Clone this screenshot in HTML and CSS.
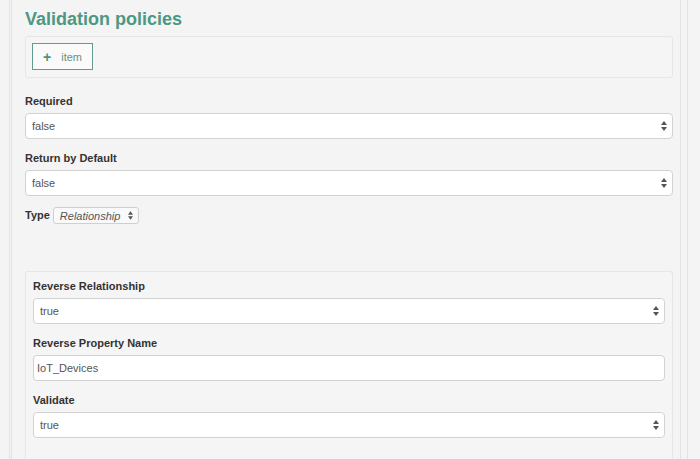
FILE: index.html
```html
<!DOCTYPE html>
<html>
<head>
<meta charset="utf-8">
<link rel="stylesheet" href="styles.css">
</head>
<body>
<div class="shell">
  <div class="content">
    <h2 class="title">Validation policies</h2>
    <div class="panel items">
      <button class="add-btn"><span class="plus">+</span><span class="btn-label">item</span></button>
    </div>

    <div class="field">
      <div class="label">Required</div>
      <div class="select"><span class="value">false</span>
        <svg class="arrows" width="6" height="10" viewBox="0 0 6 10"><path d="M3 0 L6 4 L0 4 Z M3 10 L6 6 L0 6 Z" fill="#555"/></svg>
      </div>
    </div>

    <div class="field">
      <div class="label">Return by Default</div>
      <div class="select"><span class="value">false</span>
        <svg class="arrows" width="6" height="10" viewBox="0 0 6 10"><path d="M3 0 L6 4 L0 4 Z M3 10 L6 6 L0 6 Z" fill="#555"/></svg>
      </div>
    </div>

    <div class="type-row">
      <span class="label inline">Type</span>
      <div class="mini-select"><span class="value italic">Relationship</span>
        <svg class="arrows" width="5" height="9" viewBox="0 0 6 10"><path d="M3 0 L6 4 L0 4 Z M3 10 L6 6 L0 6 Z" fill="#555"/></svg>
      </div>
    </div>

    <div class="panel sub">
      <div class="field first">
        <div class="label">Reverse Relationship</div>
        <div class="select"><span class="value">true</span>
          <svg class="arrows" width="6" height="10" viewBox="0 0 6 10"><path d="M3 0 L6 4 L0 4 Z M3 10 L6 6 L0 6 Z" fill="#555"/></svg>
        </div>
      </div>
      <div class="field">
        <div class="label">Reverse Property Name</div>
        <div class="input"><span class="value">IoT_Devices</span></div>
      </div>
      <div class="field">
        <div class="label">Validate</div>
        <div class="select"><span class="value">true</span>
          <svg class="arrows" width="6" height="10" viewBox="0 0 6 10"><path d="M3 0 L6 4 L0 4 Z M3 10 L6 6 L0 6 Z" fill="#555"/></svg>
        </div>
      </div>
    </div>
  </div>
</div>
</body>
</html>
```

FILE: styles.css
```css
* { box-sizing: border-box; }

html, body {
  margin: 0;
  padding: 0;
  background: #f4f4f4;
  height: 459px;
  overflow: hidden;
  font-family: "Liberation Sans", Arial, Helvetica, sans-serif;
}

.shell {
  margin-left: 9px;
  width: 679px;
  height: 459px;
  border-left: 1px solid #e3e3e3;
  border-right: 1px solid #e3e3e3;
  padding-left: 1px;
  padding-right: 6px;
}

.content {
  height: 100%;
  border-left: 1px solid #e3e3e3;
  border-right: 1px solid #e3e3e3;
  padding: 9px 7px 0 13px;
  display: flex;
  flex-direction: column;
}

.title {
  margin: 0;
  font-size: 18px;
  line-height: 20px;
  font-weight: bold;
  color: #4c9883;
}

.panel {
  background: #f5f5f5;
  border: 1px solid #e6e6e6;
  border-radius: 3px;
}

.items {
  margin-top: 7px;
  padding: 6px 6px 7px;
  height: 42px;
}

.add-btn {
  display: flex;
  align-items: center;
  height: 27px;
  width: 61px;
  padding: 0 0 0 10px;
  margin: 0;
  background: #fafafa;
  border: 1px solid #5f9e8c;
  border-radius: 0;
  font-family: inherit;
}

.plus {
  font-size: 14px;
  font-weight: bold;
  color: #4a9580;
  line-height: 1;
}

.btn-label {
  margin-left: 10px;
  font-size: 11px;
  color: #6b8f84;
}

.field {
  display: flex;
  flex-direction: column;
  margin-top: 12px;
}

.content > .items + .field {
  margin-top: 16px;
}

.sub .field.first {
  margin-top: 0;
}

.label {
  font-size: 11px;
  line-height: 15px;
  font-weight: bold;
  color: #333;
  margin-bottom: 4px;
}

.label.inline {
  margin: 0 3px 0 0;
}

.select, .input {
  height: 26px;
  background: #fff;
  border: 1px solid #d2d2d2;
  border-radius: 4px;
  display: flex;
  align-items: center;
  justify-content: space-between;
  padding: 0 5px 0 6px;
}

.input {
  padding-left: 3px;
}

.value {
  font-size: 11px;
  color: #555;
}

.italic {
  font-style: italic;
}

.arrows {
  display: block;
}

.type-row {
  display: flex;
  align-items: center;
  margin-top: 11px;
  height: 17px;
}

.mini-select {
  width: 86px;
  height: 17px;
  border: 1px solid #cfcfcf;
  border-radius: 3px;
  background: #f9f9f9;
  display: flex;
  align-items: center;
  justify-content: space-between;
  padding: 0 5px 0 6px;
}

.sub {
  margin-top: 47px;
  padding: 7px 7px 0;
  flex: 1;
  border-bottom: none;
  border-radius: 3px 3px 0 0;
}
```
